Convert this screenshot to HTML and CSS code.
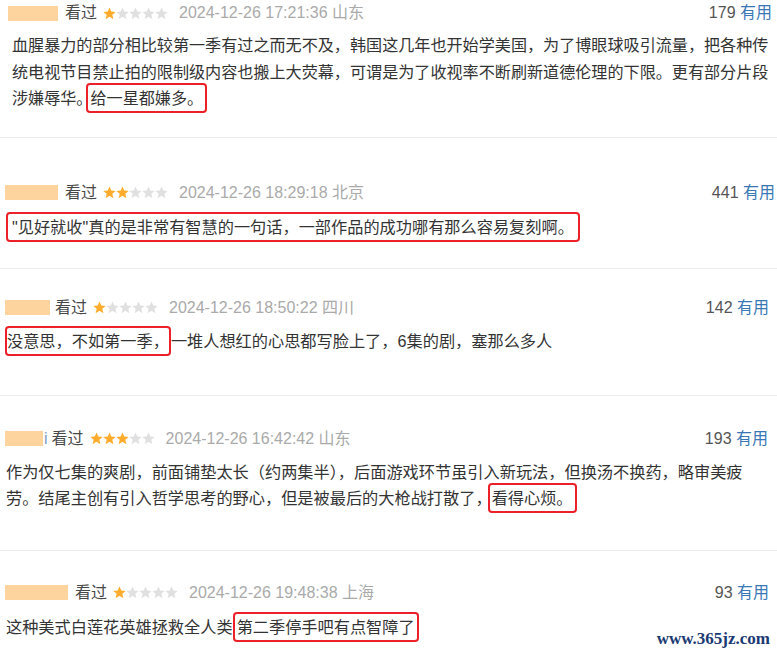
FILE: index.html
```html
<!DOCTYPE html>
<html lang="zh-CN">
<head>
    <meta charset="UTF-8">
    <meta name="viewport" content="width=device-width, initial-scale=1.0">
    <title>短评</title>
    <link rel="stylesheet" href="styles.css">
</head>
<body>
    <div class="comments">
        <div class="comment c1">
            <div class="meta">
                <span class="mask" style="width: 50px"></span>
                <span class="watched">看过</span>
                <svg class="stars" width="65" height="13" viewBox="0 0 65 13">
                    <g class="on"><polygon points="6.5,0.5 8.3,4.6 12.7,4.9 9.3,7.8 10.4,12.2 6.5,9.8 2.6,12.2 3.7,7.8 0.3,4.9 4.7,4.6"/></g>
                    <g class="off">
                        <polygon transform="translate(13,0)" points="6.5,0.5 8.3,4.6 12.7,4.9 9.3,7.8 10.4,12.2 6.5,9.8 2.6,12.2 3.7,7.8 0.3,4.9 4.7,4.6"/>
                        <polygon transform="translate(26,0)" points="6.5,0.5 8.3,4.6 12.7,4.9 9.3,7.8 10.4,12.2 6.5,9.8 2.6,12.2 3.7,7.8 0.3,4.9 4.7,4.6"/>
                        <polygon transform="translate(39,0)" points="6.5,0.5 8.3,4.6 12.7,4.9 9.3,7.8 10.4,12.2 6.5,9.8 2.6,12.2 3.7,7.8 0.3,4.9 4.7,4.6"/>
                        <polygon transform="translate(52,0)" points="6.5,0.5 8.3,4.6 12.7,4.9 9.3,7.8 10.4,12.2 6.5,9.8 2.6,12.2 3.7,7.8 0.3,4.9 4.7,4.6"/>
                    </g>
                </svg>
                <span class="time">2024-12-26 17:21:36 山东</span>
                <span class="votes">179 <a class="useful">有用</a></span>
            </div>
            <p class="text">血腥暴力的部分相比较第一季有过之而无不及，韩国这几年也开始学美国，为了博眼球吸引流量，把各种传统电视节目禁止拍的限制级内容也搬上大荧幕，可谓是为了收视率不断刷新道德伦理的下限。更有部分片段涉嫌辱华。<span class="mark">给一星都嫌多。</span></p>
        </div>

        <div class="comment c2">
            <div class="meta">
                <span class="mask" style="width: 53px"></span>
                <span class="watched">看过</span>
                <svg class="stars" width="65" height="13" viewBox="0 0 65 13">
                    <g class="on">
                        <polygon points="6.5,0.5 8.3,4.6 12.7,4.9 9.3,7.8 10.4,12.2 6.5,9.8 2.6,12.2 3.7,7.8 0.3,4.9 4.7,4.6"/>
                        <polygon transform="translate(13,0)" points="6.5,0.5 8.3,4.6 12.7,4.9 9.3,7.8 10.4,12.2 6.5,9.8 2.6,12.2 3.7,7.8 0.3,4.9 4.7,4.6"/>
                    </g>
                    <g class="off">
                        <polygon transform="translate(26,0)" points="6.5,0.5 8.3,4.6 12.7,4.9 9.3,7.8 10.4,12.2 6.5,9.8 2.6,12.2 3.7,7.8 0.3,4.9 4.7,4.6"/>
                        <polygon transform="translate(39,0)" points="6.5,0.5 8.3,4.6 12.7,4.9 9.3,7.8 10.4,12.2 6.5,9.8 2.6,12.2 3.7,7.8 0.3,4.9 4.7,4.6"/>
                        <polygon transform="translate(52,0)" points="6.5,0.5 8.3,4.6 12.7,4.9 9.3,7.8 10.4,12.2 6.5,9.8 2.6,12.2 3.7,7.8 0.3,4.9 4.7,4.6"/>
                    </g>
                </svg>
                <span class="time">2024-12-26 18:29:18 北京</span>
                <span class="votes">441 <a class="useful">有用</a></span>
            </div>
            <p class="text"><span class="mark">"见好就收"真的是非常有智慧的一句话，一部作品的成功哪有那么容易复刻啊。</span></p>
        </div>

        <div class="comment c3">
            <div class="meta">
                <span class="mask" style="width: 45px"></span>
                <span class="watched">看过</span>
                <svg class="stars" width="65" height="13" viewBox="0 0 65 13">
                    <g class="on"><polygon points="6.5,0.5 8.3,4.6 12.7,4.9 9.3,7.8 10.4,12.2 6.5,9.8 2.6,12.2 3.7,7.8 0.3,4.9 4.7,4.6"/></g>
                    <g class="off">
                        <polygon transform="translate(13,0)" points="6.5,0.5 8.3,4.6 12.7,4.9 9.3,7.8 10.4,12.2 6.5,9.8 2.6,12.2 3.7,7.8 0.3,4.9 4.7,4.6"/>
                        <polygon transform="translate(26,0)" points="6.5,0.5 8.3,4.6 12.7,4.9 9.3,7.8 10.4,12.2 6.5,9.8 2.6,12.2 3.7,7.8 0.3,4.9 4.7,4.6"/>
                        <polygon transform="translate(39,0)" points="6.5,0.5 8.3,4.6 12.7,4.9 9.3,7.8 10.4,12.2 6.5,9.8 2.6,12.2 3.7,7.8 0.3,4.9 4.7,4.6"/>
                        <polygon transform="translate(52,0)" points="6.5,0.5 8.3,4.6 12.7,4.9 9.3,7.8 10.4,12.2 6.5,9.8 2.6,12.2 3.7,7.8 0.3,4.9 4.7,4.6"/>
                    </g>
                </svg>
                <span class="time">2024-12-26 18:50:22 四川</span>
                <span class="votes">142 <a class="useful">有用</a></span>
            </div>
            <p class="text"><span class="mark">没意思，不如第一季，</span>一堆人想红的心思都写脸上了，6集的剧，塞那么多人</p>
        </div>

        <div class="comment c4">
            <div class="meta">
                <span class="name"><span class="mask" style="width: 38px"></span>i</span>
                <span class="watched">看过</span>
                <svg class="stars" width="65" height="13" viewBox="0 0 65 13">
                    <g class="on">
                        <polygon points="6.5,0.5 8.3,4.6 12.7,4.9 9.3,7.8 10.4,12.2 6.5,9.8 2.6,12.2 3.7,7.8 0.3,4.9 4.7,4.6"/>
                        <polygon transform="translate(13,0)" points="6.5,0.5 8.3,4.6 12.7,4.9 9.3,7.8 10.4,12.2 6.5,9.8 2.6,12.2 3.7,7.8 0.3,4.9 4.7,4.6"/>
                        <polygon transform="translate(26,0)" points="6.5,0.5 8.3,4.6 12.7,4.9 9.3,7.8 10.4,12.2 6.5,9.8 2.6,12.2 3.7,7.8 0.3,4.9 4.7,4.6"/>
                    </g>
                    <g class="off">
                        <polygon transform="translate(39,0)" points="6.5,0.5 8.3,4.6 12.7,4.9 9.3,7.8 10.4,12.2 6.5,9.8 2.6,12.2 3.7,7.8 0.3,4.9 4.7,4.6"/>
                        <polygon transform="translate(52,0)" points="6.5,0.5 8.3,4.6 12.7,4.9 9.3,7.8 10.4,12.2 6.5,9.8 2.6,12.2 3.7,7.8 0.3,4.9 4.7,4.6"/>
                    </g>
                </svg>
                <span class="time">2024-12-26 16:42:42 山东</span>
                <span class="votes">193 <a class="useful">有用</a></span>
            </div>
            <p class="text">作为仅七集的爽剧，前面铺垫太长（约两集半），后面游戏环节虽引入新玩法，但换汤不换药，略审美疲劳。结尾主创有引入哲学思考的野心，但是被最后的大枪战打散了，<span class="mark">看得心烦。</span></p>
        </div>

        <div class="comment c5">
            <div class="meta">
                <span class="mask" style="width: 63px"></span>
                <span class="watched">看过</span>
                <svg class="stars" width="65" height="13" viewBox="0 0 65 13">
                    <g class="on"><polygon points="6.5,0.5 8.3,4.6 12.7,4.9 9.3,7.8 10.4,12.2 6.5,9.8 2.6,12.2 3.7,7.8 0.3,4.9 4.7,4.6"/></g>
                    <g class="off">
                        <polygon transform="translate(13,0)" points="6.5,0.5 8.3,4.6 12.7,4.9 9.3,7.8 10.4,12.2 6.5,9.8 2.6,12.2 3.7,7.8 0.3,4.9 4.7,4.6"/>
                        <polygon transform="translate(26,0)" points="6.5,0.5 8.3,4.6 12.7,4.9 9.3,7.8 10.4,12.2 6.5,9.8 2.6,12.2 3.7,7.8 0.3,4.9 4.7,4.6"/>
                        <polygon transform="translate(39,0)" points="6.5,0.5 8.3,4.6 12.7,4.9 9.3,7.8 10.4,12.2 6.5,9.8 2.6,12.2 3.7,7.8 0.3,4.9 4.7,4.6"/>
                        <polygon transform="translate(52,0)" points="6.5,0.5 8.3,4.6 12.7,4.9 9.3,7.8 10.4,12.2 6.5,9.8 2.6,12.2 3.7,7.8 0.3,4.9 4.7,4.6"/>
                    </g>
                </svg>
                <span class="time">2024-12-26 19:48:38 上海</span>
                <span class="votes">93 <a class="useful">有用</a></span>
            </div>
            <p class="text">这种美式白莲花英雄拯救全人类<span class="mark">第二季停手吧有点智障了</span></p>
        </div>
    </div>

    <div class="watermark">www.365jz.com</div>
</body>
</html>
```

FILE: styles.css
```css
* {
    margin: 0;
    padding: 0;
    box-sizing: border-box;
}

body {
    font-family: 'Liberation Sans', 'Noto Sans CJK SC', sans-serif;
    background: #fff;
    color: #333;
    width: 777px;
    height: 655px;
    overflow: hidden;
    position: relative;
}

.comment {
    padding: 0 5px 0 5px;
    border-bottom: 1px solid #ececec;
}

.comment:last-child {
    border-bottom: none;
}

.meta {
    display: flex;
    align-items: center;
    height: 20px;
    font-size: 16px;
    line-height: 20px;
}

.mask {
    display: inline-block;
    height: 15px;
    background: #fdd39e;
    margin-right: 7px;
}

.name {
    display: flex;
    align-items: center;
    color: #7d9cc6;
    margin-right: 4px;
}

.name .mask {
    margin-right: 1px;
}

.watched {
    color: #494949;
    margin-right: 6px;
}

.stars {
    display: block;
    margin-right: 11px;
}

.stars .on {
    fill: #ffac2d;
}

.stars .off {
    fill: #e0e0e0;
}

.time {
    color: #aaa;
}

.votes {
    margin-left: auto;
    color: #555;
}

.useful {
    color: #3a78b5;
}

.text {
    font-size: 16.2px;
    line-height: 26px;
}

.mark {
    border: 2px solid #ec2028;
    border-radius: 4px;
    padding: 4px 2px;
}

/* each row was cut from a different page, so spacing differs a little */
.c1 {
    padding: 3px 0 25px 12px;
}

.c1 .meta {
    margin-left: -4px;
    margin-right: 5px;
}

.c1 .text {
    font-size: 16.1px;
    line-height: 26.5px;
    margin-top: 9px;
}

.c1 .mark {
    margin-left: -6px;
}

.c2 {
    padding-top: 45px;
    padding-bottom: 28px;
    padding-right: 2px;
}

.c2 .text {
    margin-top: 11px;
    padding-left: 1px;
}

.c2 .mark {
    padding: 4px 4px;
}

.c3 {
    padding-top: 29px;
    padding-bottom: 41px;
    padding-right: 8px;
}

.c3 .mask {
    margin-right: 5px;
}

.c3 .text {
    margin-top: 10px;
}

.c3 .mark {
    padding: 4px 0;
}

.c4 {
    padding-top: 33px;
    padding-bottom: 39px;
    padding-right: 9px;
}

.c4 .text {
    max-width: 752px;
    margin-top: 10px;
    padding-left: 1px;
}

.c4 .mark {
    margin-left: -4px;
}

.c5 {
    padding-top: 32px;
    padding-right: 8px;
}

.c5 .text {
    margin-top: 11px;
    padding-left: 1px;
}

.watermark {
    position: absolute;
    right: 7px;
    bottom: 6px;
    font-family: 'Liberation Serif', serif;
    font-weight: bold;
    font-size: 17px;
    color: #1b3a73;
}
```
